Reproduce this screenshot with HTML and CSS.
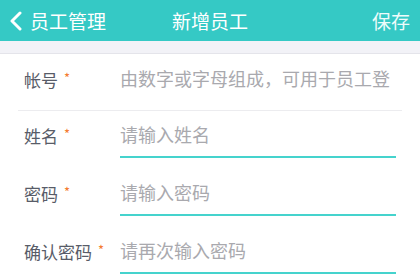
FILE: index.html
```html
<!DOCTYPE html>
<html lang="zh">
<head>
<meta charset="utf-8">
<link rel="stylesheet" href="styles.css">
</head>
<body>
<div class="nav">
  <div class="back">
    <svg class="chev" width="14" height="20" viewBox="0 0 14 20"><path d="M11 2 L3 10 L11 18" fill="none" stroke="#fff" stroke-width="3" stroke-linecap="round" stroke-linejoin="round"/></svg>
    <span>员工管理</span>
  </div>
  <div class="title">新增员工</div>
  <div class="save">保存</div>
</div>
<div class="strip"></div>
<div class="form">
  <div class="row first">
    <div class="label">帐号<span class="req">*</span></div>
    <div class="field plain"><span class="ph">由数字或字母组成，可用于员工登录</span></div>
  </div>
  <div class="row second">
    <div class="label">姓名<span class="req">*</span></div>
    <div class="field"><span class="ph">请输入姓名</span></div>
  </div>
  <div class="row">
    <div class="label">密码<span class="req">*</span></div>
    <div class="field"><span class="ph">请输入密码</span></div>
  </div>
  <div class="row">
    <div class="label">确认密码<span class="req">*</span></div>
    <div class="field"><span class="ph">请再次输入密码</span></div>
  </div>
</div>
</body>
</html>
```
FILE: styles.css
```css
html, body {
  margin: 0;
  padding: 0;
  background: #fff;
  font-family: "Noto Sans CJK SC", "Noto Sans", sans-serif;
}
.nav {
  height: 41px;
  background: #35c9c5;
  display: flex;
  align-items: center;
  justify-content: space-between;
  color: #fff;
  font-size: 19px;
  padding: 0 10px 0 9px;
  position: relative;
}
.back {
  display: flex;
  align-items: center;
  gap: 7px;
}
.chev {
  display: block;
}
.title {
  position: absolute;
  left: 0;
  right: 0;
  text-align: center;
  pointer-events: none;
}
.save {
  color: #eefcfb;
}
.strip {
  height: 12px;
  background: #f2f2f7;
  border-bottom: 1px solid #e4e4ea;
}
.row {
  display: flex;
  align-items: flex-start;
  padding-top: 22px;
}
.label {
  width: 96px;
  padding-left: 24px;
  font-size: 17px;
  line-height: 24px;
  color: #585c68;
  flex: none;
  white-space: nowrap;
}
.req {
  color: #f47a30;
  font-size: 13px;
  margin-left: 6px;
  vertical-align: 4px;
}
.field {
  width: 276px;
  line-height: 24px;
  padding-bottom: 9px;
  border-bottom: 2px solid #45d3cd;
  overflow: hidden;
  white-space: nowrap;
}
.ph {
  font-size: 18px;
  color: #a9a9ae;
}
.row.first {
  margin: 0 18px;
  padding-top: 12px;
  height: 44px;
  border-bottom: 1px solid #ececef;
}
.row.first .label {
  width: 96px;
  padding-left: 6px;
}
.row.first .field {
  border-bottom: none;
  width: 270px;
}
.row.second {
  padding-top: 11px;
}
```
